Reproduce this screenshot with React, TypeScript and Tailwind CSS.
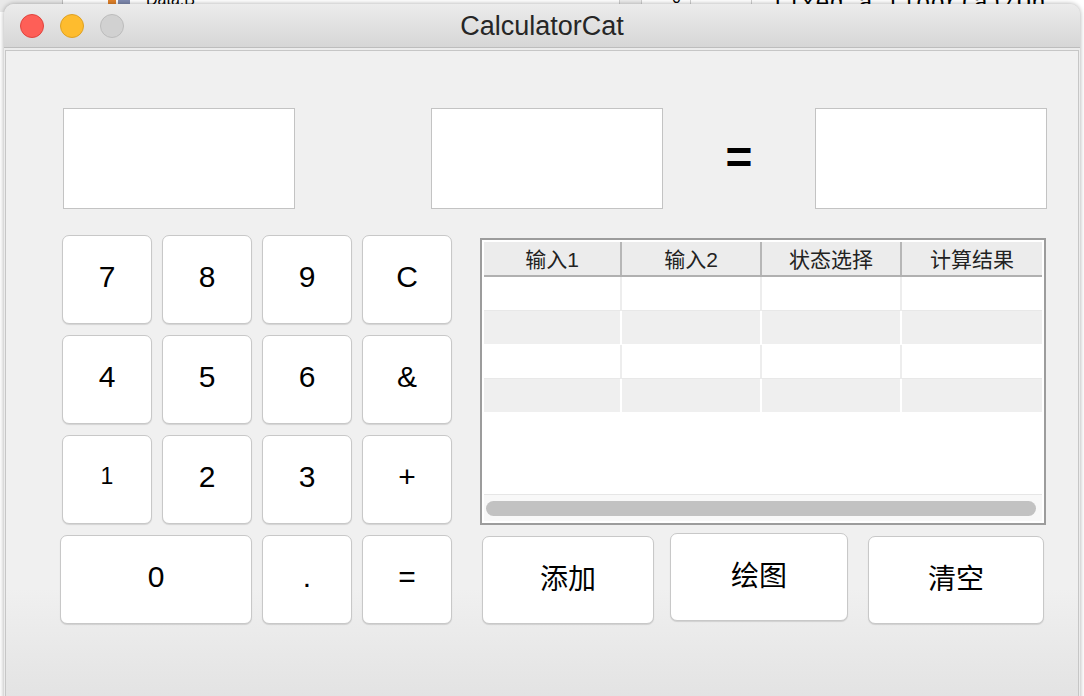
import React from "react";

const keys: { label: string; span?: boolean; small?: boolean }[] = [
  { label: "7" },
  { label: "8" },
  { label: "9" },
  { label: "C" },
  { label: "4" },
  { label: "5" },
  { label: "6" },
  { label: "&" },
  { label: "1", small: true },
  { label: "2" },
  { label: "3" },
  { label: "+" },
  { label: "0", span: true },
  { label: "." },
  { label: "=" },
];

const headers = ["输入1", "输入2", "状态选择", "计算结果"];
const colWidths = ["w-[138px]", "w-[140px]", "w-[140px]", "w-[140px]"];

const font = {
  fontFamily: '"Liberation Sans", "Noto Sans CJK SC", sans-serif',
};

const Desktop: React.FC = () => (
  // the window behind this one, only its bottom edge peeks out
  <div className="absolute inset-0 bg-white">
    <div className="absolute left-0 top-0 h-[12px] w-[63px] bg-[#e9e9e9] border-r border-[#c2c2c2]" />
    <div className="absolute left-[108px] top-[-6px] h-[10px] w-[8px] bg-[#e2822a]" />
    <div className="absolute left-[118px] top-[-6px] h-[10px] w-[12px] bg-[#7f8ab0]" />
    <div className="absolute left-[146px] top-[-12px] text-[16px] text-black">Data.B</div>
    <div className="absolute left-[619px] top-0 h-[12px] w-[23px] bg-[#eeeeee] border-x border-[#cfcfcf]" />
    <div className="absolute left-[672px] top-[-14px] text-[16px] text-black">0</div>
    <div className="absolute left-[690px] top-0 h-[12px] w-[62px] border-x border-[#cfcfcf]" />
    <div
      className="absolute left-[772px] top-[-14px] text-[24px] text-black whitespace-nowrap"
      style={{ fontFamily: '"Liberation Mono", monospace' }}
    >
      fixed a=floor(a)/On
    </div>
  </div>
);

const KeyButton: React.FC<{ label: string; span?: boolean; small?: boolean }> = ({
  label,
  span,
  small,
}) => (
  <button
    className={`${span ? "col-span-2 -ml-[2px]" : ""} h-[89px] rounded-[7px] border border-[#c8c8c8] bg-white shadow-[0_1px_1px_rgba(0,0,0,0.12)] flex items-center justify-center pb-[7px] text-black ${
      small ? "text-[23px]" : "text-[30px]"
    }`}
  >
    {label}
  </button>
);

export default function App() {
  return (
    <div className="relative w-[1084px] h-[696px] overflow-hidden" style={font}>
      <Desktop />

      <div className="relative z-10 ml-[4px] mt-[4px] w-[1076px] h-[720px] rounded-t-[10px] bg-[#ececec] shadow-[0_0_5px_rgba(0,0,0,0.35)] flex flex-col">
        {/* Title bar */}
        <div className="relative h-[44px] rounded-t-[10px] bg-gradient-to-b from-[#ececec] to-[#d6d6d6] border-b border-[#bdbdbd] flex items-center justify-center">
          <div className="absolute left-[16px] top-[10px] flex gap-[16px]">
            <span className="w-[24px] h-[24px] rounded-full bg-[#fe5f57] border border-[#e0443e]" />
            <span className="w-[24px] h-[24px] rounded-full bg-[#febc2e] border border-[#dea123]" />
            <span className="w-[24px] h-[24px] rounded-full bg-[#d1d1d1] border border-[#bcbcbc]" />
          </div>
          <span className="text-[27px] text-[#262626] mt-[2px]">CalculatorCat</span>
        </div>

        {/* Content */}
        <div className="flex-1 mx-[1px] mt-[2px] border border-[#c6c6c6] bg-gradient-to-b from-[#f0f0f0] from-80% to-[#e0e0e0]">
          {/* Display row */}
          <div className="flex items-center pl-[57px] pt-[57px]">
            <div className="w-[232px] h-[101px] bg-white border border-[#c3c3c3]" />
            <div className="w-[136px]" />
            <div className="w-[232px] h-[101px] bg-white border border-[#c3c3c3]" />
            <div className="w-[152px] flex items-center justify-center text-[46px] font-bold leading-none text-black pb-[4px]">
              =
            </div>
            <div className="w-[232px] h-[101px] bg-white border border-[#c3c3c3]" />
          </div>

          {/* Keypad + table */}
          <div className="flex items-start pl-[56px] pt-[26px]">
            <div className="grid grid-cols-[90px_90px_90px_90px] gap-x-[10px] gap-y-[11px]">
              {keys.map((k) => (
                <KeyButton key={k.label} {...k} />
              ))}
            </div>

            <div className="ml-[28px] mt-[3px] flex flex-col">
              {/* Table */}
              <div className="w-[566px] h-[287px] border-2 border-[#9c9c9c] bg-white p-[2px] flex flex-col">
                <div className="flex h-[35px] bg-[#ececec] border-b-2 border-[#b0b0b0]">
                  {headers.map((h, i) => (
                    <div
                      key={h}
                      className={`${colWidths[i]} flex items-center justify-center pt-[3px] text-[21px] text-[#222] ${
                        i < 3 ? "border-r-2 border-[#b6b6b6]" : ""
                      }`}
                    >
                      {h}
                    </div>
                  ))}
                </div>
                {[0, 1, 2, 3].map((r) => (
                  <div
                    key={r}
                    className={`flex h-[34px] ${r % 2 ? "bg-[#efefef]" : "bg-white"}`}
                  >
                    {colWidths.map((w, i) => (
                      <div
                        key={i}
                        className={`${w} border-b ${
                          r % 2 ? "border-white" : "border-[#e8e8e8]"
                        } ${
                          i < 3
                            ? r % 2
                              ? "border-r-2 border-r-white"
                              : "border-r-2 border-r-[#ededed]"
                            : ""
                        }`}
                      />
                    ))}
                  </div>
                ))}
                <div className="flex-1" />
                <div className="h-[27px] bg-[#f8f8f8] border-t border-[#e6e6e6] flex items-center pl-[2px] pr-[6px]">
                  <div className="w-full h-[15px] rounded-full bg-[#c2c2c2]" />
                </div>
              </div>

              {/* Action buttons */}
              <div className="flex items-start pl-[2px]">
                <button className="mt-[11px] w-[172px] h-[88px] rounded-[7px] border border-[#c8c8c8] bg-white shadow-[0_1px_1px_rgba(0,0,0,0.12)] text-[28px] text-black">
                  添加
                </button>
                <button className="mt-[8px] ml-[16px] w-[178px] h-[88px] rounded-[7px] border border-[#c8c8c8] bg-white shadow-[0_1px_1px_rgba(0,0,0,0.12)] text-[28px] text-black">
                  绘图
                </button>
                <button className="mt-[11px] ml-[20px] w-[176px] h-[88px] rounded-[7px] border border-[#c8c8c8] bg-white shadow-[0_1px_1px_rgba(0,0,0,0.12)] text-[28px] text-black">
                  清空
                </button>
              </div>
            </div>
          </div>
        </div>
      </div>
    </div>
  );
}
